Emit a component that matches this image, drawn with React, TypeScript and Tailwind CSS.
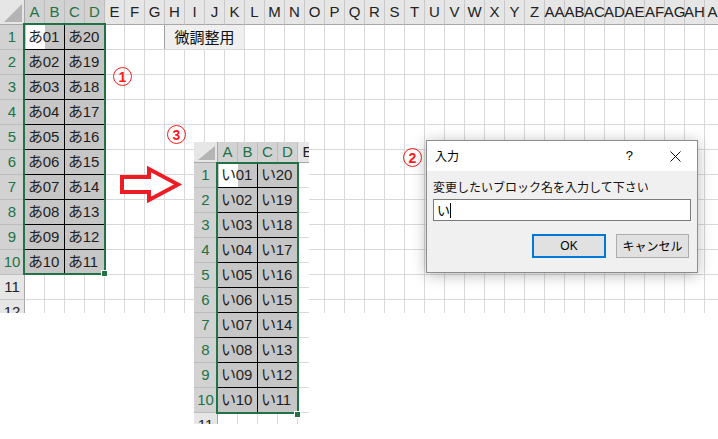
import React from "react";

const COLS = [
  "A","B","C","D","E","F","G","H","I","J","K","L","M","N","O","P","Q","R","S","T","U","V","W","X","Y","Z",
  "AA","AB","AC","AD","AE","AF","AG","AH","AI",
];

const FONT = { fontFamily: "'Liberation Sans', 'Noto Sans CJK JP', sans-serif" };

function Corner({ w, h }: { w: number; h: number }) {
  return (
    <div
      className="shrink-0 bg-[#e6e6e6] border-r border-b border-[#a8a8a8] flex items-end justify-end"
      style={{ width: w, height: h }}
    >
      <svg width={w - 1} height={h - 1} viewBox={`0 0 ${w - 1} ${h - 1}`}>
        <polygon points={`4,${h - 3} ${w - 3},4 ${w - 3},${h - 3}`} fill="#b4b4b4" />
      </svg>
    </div>
  );
}

function ColHeader({ label, selected }: { label: string; selected: boolean }) {
  return (
    <div
      className={
        "w-[20px] shrink-0 h-full border-r border-b flex items-center justify-center text-[15px] overflow-visible whitespace-nowrap " +
        (selected
          ? "bg-[#d2d2d2] text-[#217346] border-r-[#bdbdbd] border-b-[#a8a8a8]"
          : "bg-[#e6e6e6] text-[#222] border-r-[#c8c8c8] border-b-[#a8a8a8]")
      }
    >
      {label}
    </div>
  );
}

function RowHeader({ n, selected, w }: { n: number; selected: boolean; w: number }) {
  return (
    <div
      className={
        "shrink-0 h-full border-r border-b flex items-center justify-center text-[15px] " +
        (selected
          ? "bg-[#d2d2d2] text-[#217346] border-r-[#a8a8a8] border-b-[#bdbdbd]"
          : "bg-[#e6e6e6] text-[#222] border-r-[#a8a8a8] border-b-[#c8c8c8]")
      }
      style={{ width: w }}
    >
      {n}
    </div>
  );
}

function GridCell() {
  return <div className="w-[20px] shrink-0 h-full border-r border-b border-[#d9d9d9]" />;
}

function DataCell({ text, active, right }: { text: string; active?: boolean; right?: boolean }) {
  return (
    <div
      className={
        "relative w-[40px] shrink-0 h-full border-b border-black bg-[#c6c6c6] flex items-center pl-[3px] text-[15px] text-[#1e1e1e] " +
        (right ? "border-r border-r-[#d9d9d9]" : "border-r border-r-black")
      }
    >
      {active && <div className="absolute left-[1px] top-0 w-[19px] h-full bg-white" />}
      <span className="relative whitespace-nowrap tracking-[-0.2px]">{text}</span>
    </div>
  );
}

function CircleNum({ n, className }: { n: string; className: string }) {
  return (
    <div
      className={
        "absolute w-[19px] h-[19px] rounded-full border-[1.5px] border-[#ff1a1a] flex items-center justify-center text-[14px] font-bold text-[#ff1a1a] leading-none " +
        className
      }
      style={FONT}
    >
      {n}
    </div>
  );
}

function MainSheet() {
  const rows = Array.from({ length: 12 }, (_, i) => i + 1);
  return (
    <div className="relative h-[313px] overflow-hidden" style={FONT}>
      <div className="flex h-[25px]">
        <Corner w={25} h={25} />
        {COLS.map((c, i) => (
          <ColHeader key={c} label={c} selected={i < 4} />
        ))}
      </div>
      {rows.map((r) => (
        <div key={r} className="flex h-[25px]">
          <RowHeader n={r} selected={r <= 10} w={25} />
          {r <= 10 ? (
            <>
              <DataCell text={`あ${String(r).padStart(2, "0")}`} active={r === 1} />
              <DataCell text={`あ${String(21 - r).padStart(2, "0")}`} right />
            </>
          ) : (
            <>
              <GridCell />
              <GridCell />
              <GridCell />
              <GridCell />
            </>
          )}
          {COLS.slice(4).map((c) => (
            <GridCell key={c} />
          ))}
        </div>
      ))}
      {/* button */}
      <div className="absolute left-[164px] top-[25px] w-[80px] h-[24px] bg-[#efefef] border-l border-[#a0a0a0] flex items-center justify-center text-[15px] text-[#111]">
        <span style={{ fontFamily: "'Noto Sans CJK JP', sans-serif" }}>微調整用</span>
      </div>
      {/* selection */}
      <div className="absolute left-[23px] top-[23px] w-[83px] h-[252px] border-2 border-[#217346]" />
      <div className="absolute left-[101px] top-[270px] w-[7px] h-[7px] bg-[#217346] border border-white" />
    </div>
  );
}

function SecondSheet() {
  const rows = Array.from({ length: 11 }, (_, i) => i + 1);
  return (
    <div className="absolute left-[194px] top-[142px] w-[115px] h-[282px] overflow-hidden bg-white" style={FONT}>
      <div className="flex h-[21px]">
        <Corner w={24} h={21} />
        {["A", "B", "C", "D", "E"].map((c, i) => (
          <ColHeader key={c} label={c} selected={i < 4} />
        ))}
      </div>
      {rows.map((r) => (
        <div key={r} className="flex h-[25px]">
          <RowHeader n={r} selected={r <= 10} w={24} />
          {r <= 10 ? (
            <>
              <DataCell text={`い${String(r).padStart(2, "0")}`} active={r === 1} />
              <DataCell text={`い${String(21 - r).padStart(2, "0")}`} right />
            </>
          ) : (
            <>
              <GridCell />
              <GridCell />
              <GridCell />
              <GridCell />
            </>
          )}
          <GridCell />
        </div>
      ))}
      <div className="absolute left-[22px] top-[20px] w-[83px] h-[252px] border-2 border-[#217346]" />
      <div className="absolute left-[100px] top-[269px] w-[7px] h-[7px] bg-[#217346] border border-white" />
    </div>
  );
}

function Dialog() {
  return (
    <div
      className="absolute left-[426px] top-[140px] w-[272px] border border-[#8c8c8c] bg-[#f0f0f0] shadow-[0_2px_14px_rgba(0,0,0,0.28)] text-black"
      style={{ fontFamily: "'Noto Sans CJK JP', sans-serif" }}
    >
      <div className="h-[30px] bg-white flex items-center pl-[8px] pr-[16px] text-[12px]">
        <span className="flex-1">入力</span>
        <span className="mr-[37px] text-[13px]" style={{ fontFamily: "'Liberation Sans', sans-serif" }}>?</span>
        <svg width="11" height="11" viewBox="0 0 11 11">
          <path d="M0.5 0.5 L10.5 10.5 M10.5 0.5 L0.5 10.5" stroke="#111" strokeWidth="1" />
        </svg>
      </div>
      <div className="pt-[8px] pb-[14px] px-[6px]">
        <div className="h-[16px] flex items-center text-[12px] text-[#111]">変更したいブロック名を入力して下さい</div>
        <div className="mt-[4px] h-[22px] bg-white border border-[#7a7a7a] flex items-center pl-[3px] text-[13px]">
          <span>い</span>
          <span className="w-[1px] h-[15px] bg-black" />
        </div>
        <div className="mt-[13px] flex justify-end gap-[10px] pr-[2px]">
          <div className="w-[74px] h-[24px] border-2 border-[#0078d7] bg-[#e1e1e1] flex items-center justify-center text-[12px]">
            <span style={{ fontFamily: "'Liberation Sans', sans-serif" }}>OK</span>
          </div>
          <div className="w-[73px] h-[24px] border border-[#adadad] bg-[#e1e1e1] flex items-center justify-center text-[12px]">
            キャンセル
          </div>
        </div>
      </div>
    </div>
  );
}

function Arrow() {
  return (
    <svg className="absolute left-[118px] top-[164px]" width="66" height="42" viewBox="118 164 66 42">
      <polygon
        points="122,177 149,177 149,169 178,184.5 149,200 149,192 122,192"
        fill="white"
        stroke="#ed1c24"
        strokeWidth="4"
        strokeLinejoin="miter"
      />
    </svg>
  );
}

export default function App() {
  return (
    <div className="relative w-[718px] h-[439px] bg-white overflow-hidden">
      <MainSheet />
      <CircleNum n="1" className="left-[113px] top-[67px]" />
      <CircleNum n="3" className="left-[167px] top-[125px]" />
      <CircleNum n="2" className="left-[403px] top-[148px]" />
      <Arrow />
      <SecondSheet />
      <Dialog />
    </div>
  );
}
